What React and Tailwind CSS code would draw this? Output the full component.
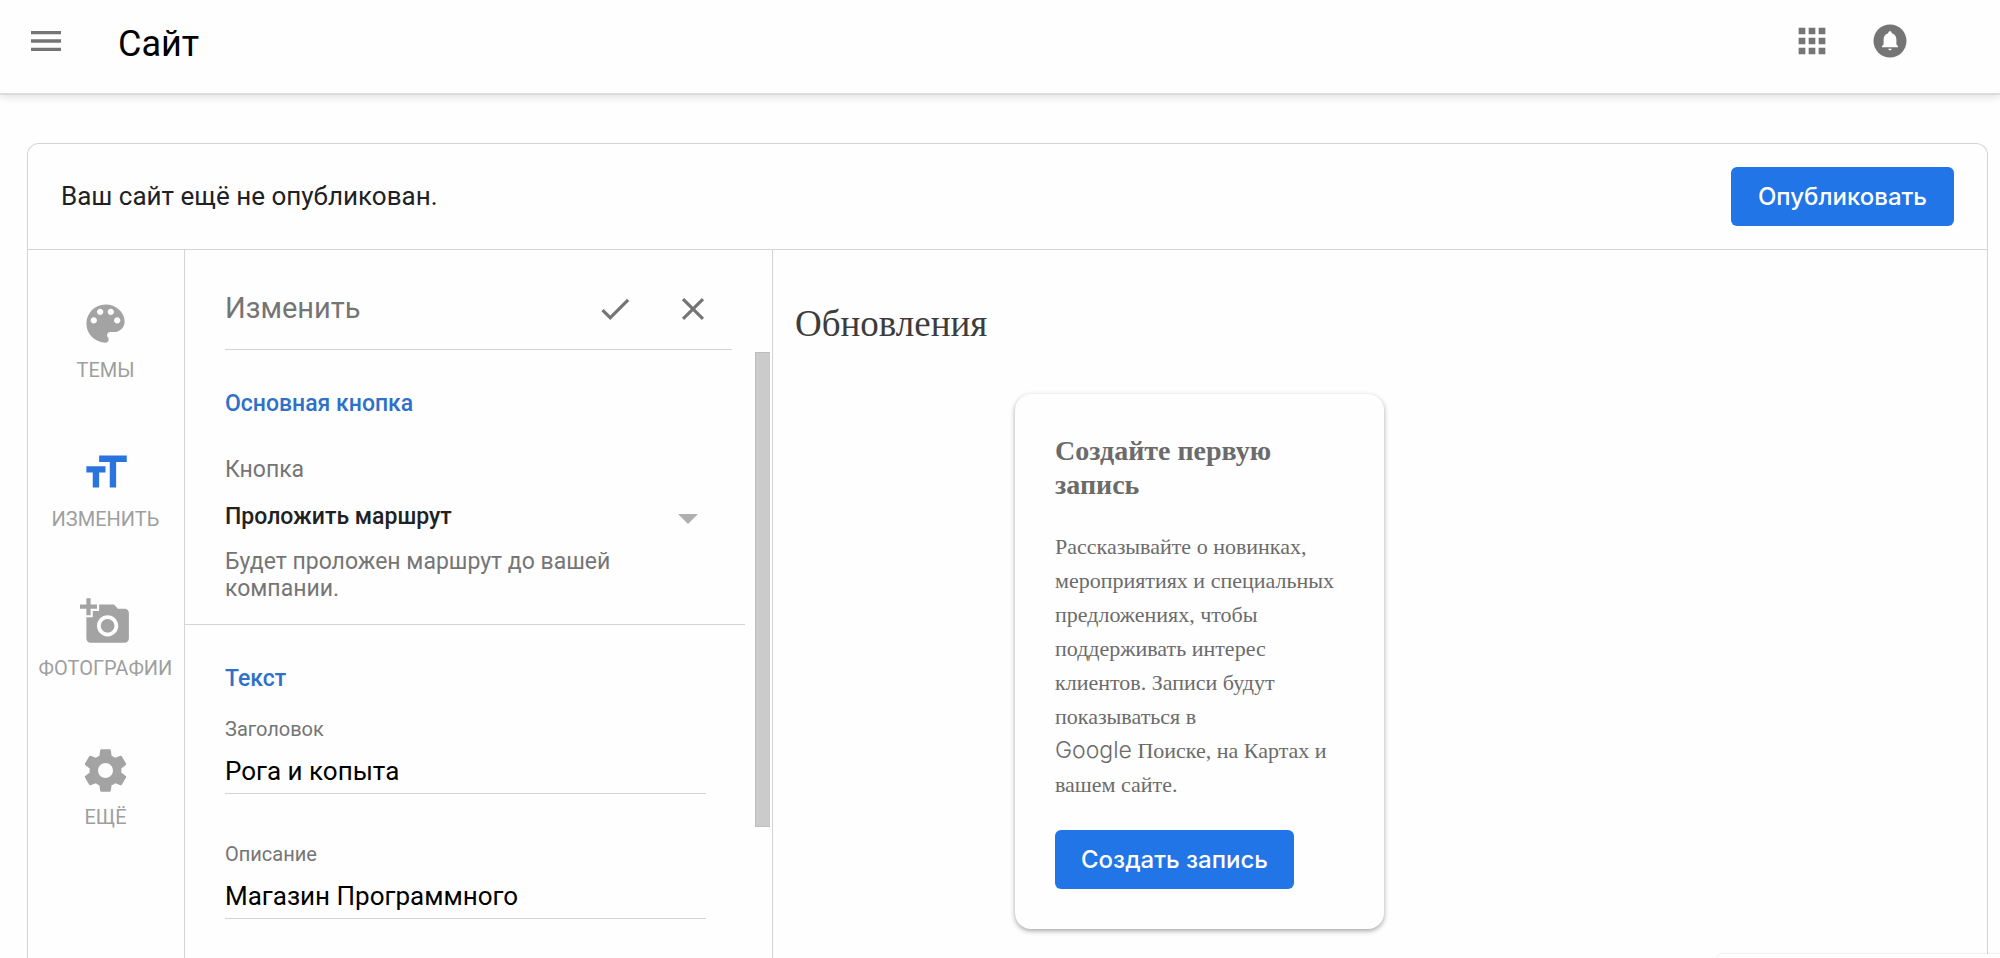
import React, { useState } from 'react';
import { MdMenu, MdApps, MdCheck, MdClose, MdFormatSize } from 'react-icons/md';

const icons = {
  palette:
    'M12 3c-4.97 0-9 4.03-9 9s4.03 9 9 9c.83 0 1.5-.67 1.5-1.5 0-.39-.15-.74-.39-1.01-.23-.26-.38-.61-.38-.99 0-.83.67-1.5 1.5-1.5H16c2.76 0 5-2.24 5-5 0-4.42-4.03-8-9-8zm-5.5 9c-.83 0-1.5-.67-1.5-1.5S5.67 9 6.5 9 8 9.67 8 10.5 7.33 12 6.5 12zm3-4C8.67 8 8 7.33 8 6.5S8.67 5 9.5 5s1.5.67 1.5 1.5S10.33 8 9.5 8zm5 0c-.83 0-1.5-.67-1.5-1.5S13.67 5 14.5 5s1.5.67 1.5 1.5S15.33 8 14.5 8zm3 4c-.83 0-1.5-.67-1.5-1.5S16.67 9 17.5 9s1.5.67 1.5 1.5-.67 1.5-1.5 1.5z',
  camera:
    'M3 4V1h2v3h3v2H5v3H3V6H0V4h3zm3 6V7h3V4h7l1.83 2H21c1.1 0 2 .9 2 2v12c0 1.1-.9 2-2 2H5c-1.1 0-2-.9-2-2V10h3zm7 9c2.76 0 5-2.24 5-5s-2.24-5-5-5-5 2.24-5 5 2.24 5 5 5zm-3.2-5c0 1.77 1.43 3.2 3.2 3.2s3.2-1.43 3.2-3.2-1.43-3.2-3.2-3.2-3.2 1.43-3.2 3.2z',
  settings:
    'M19.43 12.98c.04-.32.07-.64.07-.98s-.03-.66-.07-.98l2.11-1.65c.19-.15.24-.42.12-.64l-2-3.46c-.12-.22-.39-.3-.61-.22l-2.49 1c-.52-.4-1.08-.73-1.69-.98l-.38-2.65C14.46 2.18 14.25 2 14 2h-4c-.25 0-.46.18-.49.42l-.38 2.65c-.61.25-1.17.59-1.69.98l-2.49-1c-.23-.09-.49 0-.61.22l-2 3.46c-.13.22-.07.49.12.64l2.11 1.65c-.04.32-.07.65-.07.98s.03.66.07.98l-2.11 1.65c-.19.15-.24.42-.12.64l2 3.46c.12.22.39.3.61.22l2.49-1c.52.4 1.08.73 1.69.98l.38 2.65c.03.24.24.42.49.42h4c.25 0 .46-.18.49-.42l.38-2.65c.61-.25 1.17-.59 1.69-.98l2.49 1c.23.09.49 0 .61-.22l2-3.46c.12-.22.07-.49-.12-.64l-2.11-1.65zM12 15.5c-1.93 0-3.5-1.57-3.5-3.5s1.57-3.5 3.5-3.5 3.5 1.57 3.5 3.5-1.57 3.5-3.5 3.5z',
};

const Glyph = ({ d }) => (
  <svg viewBox="0 0 24 24" width="51" height="51" fill="currentColor" aria-hidden="true">
    <path d={d} />
  </svg>
);

const tabs = [
  { id: 'themes', label: 'ТЕМЫ', icon: <Glyph d={icons.palette} /> },
  { id: 'edit', label: 'ИЗМЕНИТЬ', icon: <MdFormatSize size={51} /> },
  { id: 'photos', label: 'ФОТОГРАФИИ', icon: <Glyph d={icons.camera} /> },
  { id: 'more', label: 'ЕЩЁ', icon: <Glyph d={icons.settings} /> },
];

const Header = () => (
  <header className="relative flex h-[95px] shrink-0 items-center border-b-2 border-[#dcdcdc] pb-[11px] pl-[26px] pr-[90px] shadow-[0_2px_8px_rgba(0,0,0,0.12)]">
    <button type="button" aria-label="Меню" className="text-[#757575]">
      <MdMenu size={40} />
    </button>
    <h1 className="ml-[52px] pt-1.5 text-4xl text-black">Сайт</h1>
    <div className="ml-auto flex items-center gap-[38px] text-[#757575]">
      <button type="button" aria-label="Приложения">
        <MdApps size={40} />
      </button>
      <button type="button" aria-label="Уведомления">
        <svg viewBox="0 0 40 40" width="40" height="40" aria-hidden="true">
          <circle cx="20" cy="20" r="16.5" fill="currentColor" />
          <path
            d="M20 10.2c-1 0-1.7.7-1.7 1.6v.4c-3 .8-4.7 3.1-4.7 6.2v5L12 25v1.2h16V25l-1.6-1.6v-5c0-3.1-1.7-5.4-4.7-6.2v-.4c0-.9-.7-1.6-1.7-1.6zM18.2 27.8c.2.9.9 1.5 1.8 1.5s1.6-.6 1.8-1.5z"
            fill="#fff"
          />
        </svg>
      </button>
    </div>
  </header>
);

const Sidebar = ({ active, onSelect }) => (
  <nav className="flex w-[157px] shrink-0 flex-col items-center gap-[65px] border-r border-[#d4d4d4] pr-px pt-12">
    {tabs.map((tab) => (
      <button
        key={tab.id}
        type="button"
        onClick={() => onSelect(tab.id)}
        className="flex flex-col items-center gap-[9px] text-[#9e9e9e]"
      >
        <span className={tab.id === active ? 'text-[#2a74de]' : 'text-[#a3a3a3]'}>{tab.icon}</span>
        <span className="text-xl leading-6">{tab.label}</span>
      </button>
    ))}
  </nav>
);

const Field = ({ id, label, value, onChange }) => (
  <div className="flex flex-col">
    <label htmlFor={id} className="text-xl leading-6 text-[#757575]">
      {label}
    </label>
    <input
      id={id}
      type="text"
      value={value}
      onChange={(e) => onChange(e.target.value)}
      className="mt-2 h-[45px] border-b border-[#d4d4d4] bg-transparent text-[26px] text-black outline-none"
    />
  </div>
);

const EditPanel = () => {
  const [action, setAction] = useState('route');
  const [title, setTitle] = useState('Рога и копыта');
  const [description, setDescription] = useState('Магазин Программного');

  return (
    <section className="flex w-[588px] shrink-0 flex-col border-r border-[#d4d4d4]">
      <div className="mx-10 flex h-[100px] shrink-0 items-center border-b border-[#d4d4d4] pr-5 pt-[18px] text-[#757575]">
        <h2 className="text-[29px]">Изменить</h2>
        <button type="button" aria-label="Сохранить" className="ml-auto">
          <MdCheck size={38} />
        </button>
        <button type="button" aria-label="Закрыть" className="ml-10">
          <MdClose size={38} />
        </button>
      </div>

      <div className="flex flex-1 justify-between pr-0.5 pt-0.5">
        <div className="w-[560px]">
          <div className="border-b border-[#d4d4d4] px-10 pb-[22px] pt-9">
            <h3 className="text-[23px] font-medium leading-8 text-[#2f70c8]">Основная кнопка</h3>
            <label htmlFor="action" className="mt-9 block text-[23px] leading-7 text-[#757575]">
              Кнопка
            </label>
            <div className="relative mt-[13px]">
              <select
                id="action"
                value={action}
                onChange={(e) => setAction(e.target.value)}
                className="h-10 w-full appearance-none bg-transparent text-[23px] font-medium text-[#202124] outline-none"
              >
                <option value="route">Проложить маршрут</option>
              </select>
              <svg
                viewBox="0 0 20 10"
                className="pointer-events-none absolute right-[7px] top-[17px] h-2.5 w-5 text-[#b0b0b0]"
                aria-hidden="true"
              >
                <path d="M0 0h20L10 10z" fill="currentColor" />
              </svg>
            </div>
            <p className="mt-[11px] text-[23px] leading-[27px] text-[#757575]">
              Будет проложен маршрут до вашей компании.
            </p>
          </div>

          <div className="flex flex-col gap-12 pl-10 pr-[39px] pt-[38px]">
            <div>
              <h3 className="mb-[22px] text-[23px] font-medium leading-8 text-[#2f70c8]">Текст</h3>
              <Field id="title" label="Заголовок" value={title} onChange={setTitle} />
            </div>
            <Field id="description" label="Описание" value={description} onChange={setDescription} />
          </div>
        </div>
        <div className="h-[475px] w-[15px] border-y border-l border-[#bdbdbd] bg-[#cbcbcb]" />
      </div>
    </section>
  );
};

const Preview = () => (
  <section className="flex-1 pl-[22px] pt-12 font-['Liberation_Serif',serif]">
    <h2 className="text-[37px] leading-[52px] text-[#3c3c3c]">Обновления</h2>
    <article className="ml-[220px] mt-11 w-[369px] rounded-2xl p-10 text-[#6b6b6b] shadow-[0_2px_5px_rgba(0,0,0,0.35)]">
      <h3 className="text-[28px] font-bold leading-[34px]">Создайте первую запись</h3>
      <p className="mt-7 text-[22px] leading-[34px]">
        Рассказывайте о новинках, мероприятиях и специальных предложениях, чтобы поддерживать
        интерес клиентов. Записи будут показываться в{' '}
        <span className="whitespace-nowrap">
          <span className="font-['Inter',sans-serif] text-[23px] font-light leading-none">Google</span>{' '}
          Поиске,
        </span>{' '}
        на Картах и вашем сайте.
      </p>
      <button
        type="button"
        className="mt-7 h-[59px] rounded-md bg-[#2175e6] px-[26px] font-['Inter',sans-serif] text-2xl font-medium text-white"
      >
        Создать запись
      </button>
    </article>
  </section>
);

const App = () => {
  const [active, setActive] = useState('edit');

  return (
    <div className="flex h-screen flex-col overflow-hidden bg-[#fefefe] font-['Roboto',sans-serif]">
      <Header />

      <main className="ml-[27px] mr-3 mt-12 flex flex-1 flex-col rounded-t-xl border border-b-0 border-[#d4d4d4]">
        <div className="flex h-[106px] shrink-0 items-center justify-between border-b border-[#d4d4d4] px-[33px]">
          <p className="text-[26px] text-[#202124]">Ваш сайт ещё не опубликован.</p>
          <button
            type="button"
            className="h-[59px] rounded-md bg-[#2175e6] px-[27px] font-['Inter',sans-serif] text-2xl font-medium text-white"
          >
            Опубликовать
          </button>
        </div>

        <div className="flex flex-1">
          <Sidebar active={active} onSelect={setActive} />
          <EditPanel />
          <Preview />
        </div>
      </main>

      {/* Top edge of the help drawer peeking in from the corner */}
      <div className="fixed bottom-0 right-0 h-1 w-[282px] rounded-tl-lg bg-[#fefefe] shadow-[0_0_2px_rgba(0,0,0,0.15)]" />
    </div>
  );
};

export default App;
